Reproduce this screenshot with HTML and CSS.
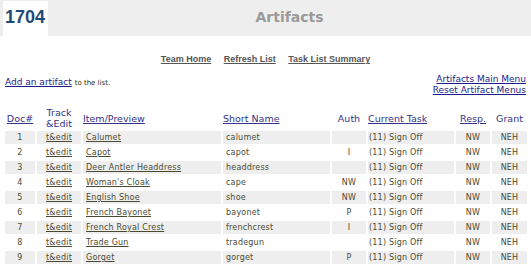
FILE: index.html
```html
<!DOCTYPE html>
<html lang="en">
<head>
    <meta charset="UTF-8">
    <title>Artifacts</title>
    <link rel="stylesheet" href="styles.css">
</head>
<body>

<div class="top">
    <div class="team-num">1704</div>
    <div class="page-title">Artifacts</div>
</div>

<div class="nav">
    <a href="#">Team Home</a>
    <a href="#">Refresh List</a>
    <a href="#">Task List Summary</a>
</div>

<div class="actions">
    <div class="add"><a href="#">Add an artifact</a> <span class="small">to the list.</span></div>
    <div class="menus">
        <a href="#">Artifacts Main Menu</a><br>
        <a href="#">Reset Artifact Menus</a>
    </div>
</div>

<table class="list">
    <colgroup>
        <col style="width:30px">
        <col style="width:44px">
        <col style="width:138px">
        <col style="width:107px">
        <col style="width:34px">
        <col style="width:86px">
        <col style="width:34px">
        <col style="width:35px">
    </colgroup>
    <thead>
        <tr>
            <th class="c"><a href="#">Doc#</a></th>
            <th class="c">Track<br>&amp;Edit</th>
            <th><a href="#">Item/Preview</a></th>
            <th><a href="#">Short Name</a></th>
            <th class="c">Auth</th>
            <th><a href="#">Current Task</a></th>
            <th class="c"><a href="#">Resp.</a></th>
            <th class="c">Grant</th>
        </tr>
    </thead>
    <tbody id="rows"></tbody>
</table>

<script>
    const artifacts = [
        ['Calumet', 'calumet', ''],
        ['Capot', 'capot', 'I'],
        ['Deer Antler Headdress', 'headdress', ''],
        ["Woman's Cloak", 'cape', 'NW'],
        ['English Shoe', 'shoe', 'NW'],
        ['French Bayonet', 'bayonet', 'P'],
        ['French Royal Crest', 'frenchcrest', 'I'],
        ['Trade Gun', 'tradegun', ''],
        ['Gorget', 'gorget', 'P']
    ];

    const rows = document.getElementById('rows');
    artifacts.forEach(function (item, i) {
        const tr = document.createElement('tr');
        if (i % 2 === 0) tr.className = 'odd';
        tr.innerHTML =
            '<td class="c">' + (i + 1) + '</td>' +
            '<td class="c"><a href="#">t&amp;edit</a></td>' +
            '<td class="pad"><a href="#">' + item[0] + '</a></td>' +
            '<td class="pad">' + item[1] + '</td>' +
            '<td class="c">' + item[2] + '</td>' +
            '<td>(11) Sign Off</td>' +
            '<td class="c">NW</td>' +
            '<td class="c">NEH</td>';
        rows.appendChild(tr);
    });
</script>

</body>
</html>
```

FILE: styles.css
```css
body {
    margin: 0;
    font-family: "DejaVu Sans", Verdana, sans-serif;
    background: #fff;
}
.top {
    display: flex;
    height: 35px;
    padding: 1px 0 0 3px;
    background: #eeeeee;
}
.team-num {
    width: 43px;
    padding-left: 2px;
    background: #fff;
    font-family: "Liberation Sans", Arial, sans-serif;
    font-weight: bold;
    font-size: 18px;
    line-height: 33px;
    color: #1f4a78;
}
.page-title {
    flex: 1;
    text-align: center;
    font-weight: bold;
    font-size: 14px;
    line-height: 33px;
    color: #9a9a9a;
}
.nav {
    margin-top: 17px;
    text-align: center;
    font-family: "Liberation Sans", Arial, sans-serif;
    font-weight: bold;
    font-size: 9px;
    line-height: 12px;
}
.nav a {
    margin: 0 5px;
    color: #555;
}
.actions {
    display: flex;
    justify-content: space-between;
    align-items: center;
    margin-top: 9px;
    padding: 0 5px;
    font-size: 9px;
    line-height: 11px;
}
.actions a {
    color: #1c1c8a;
}
.add {
    margin-bottom: 5px;
}
.small {
    font-size: 7px;
    color: #333300;
}
.menus {
    text-align: right;
}
.list {
    margin: 9px 0 0 3px;
    width: 526px;
    table-layout: fixed;
    border-spacing: 2px;
    font-size: 8px;
    letter-spacing: 0.2px;
    color: #4a4a33;
}
.list th {
    padding: 0;
    text-align: left;
    vertical-align: middle;
    font-weight: normal;
    font-size: 9.5px;
    line-height: 11px;
    letter-spacing: 0;
    color: #333388;
}
.list th a {
    color: #333388;
}
.list th.c {
    text-align: center;
}
.list td {
    height: 13px;
    padding: 0 0 0 1px;
    line-height: 13px;
    white-space: nowrap;
    overflow: hidden;
}
.list td.c {
    text-align: center;
    padding: 0;
}
.list td.pad {
    padding-left: 3px;
}
.list td a {
    color: #4a4a33;
}
.list tr.odd td {
    background: #eeeeee;
}
```
